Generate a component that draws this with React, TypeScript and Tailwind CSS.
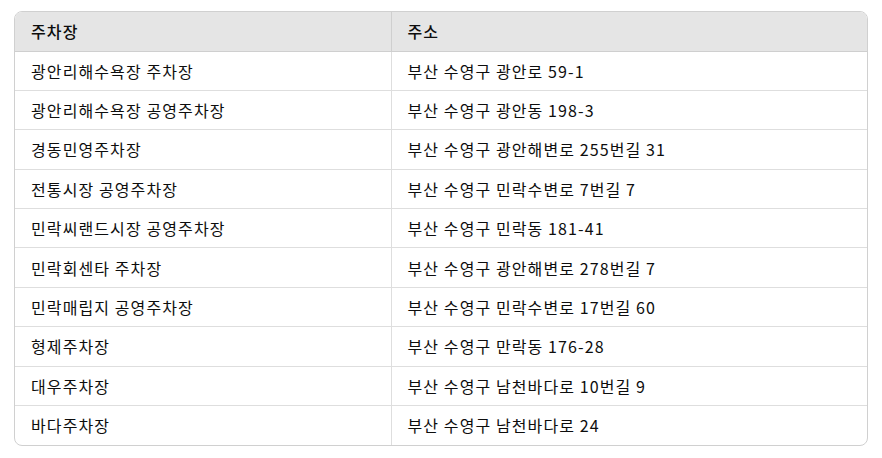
const rows = [
  ["광안리해수욕장 주차장", "부산 수영구 광안로 59-1"],
  ["광안리해수욕장 공영주차장", "부산 수영구 광안동 198-3"],
  ["경동민영주차장", "부산 수영구 광안해변로 255번길 31"],
  ["전통시장 공영주차장", "부산 수영구 민락수변로 7번길 7"],
  ["민락씨랜드시장 공영주차장", "부산 수영구 민락동 181-41"],
  ["민락회센타 주차장", "부산 수영구 광안해변로 278번길 7"],
  ["민락매립지 공영주차장", "부산 수영구 민락수변로 17번길 60"],
  ["형제주차장", "부산 수영구 만락동 176-28"],
  ["대우주차장", "부산 수영구 남천바다로 10번길 9"],
  ["바다주차장", "부산 수영구 남천바다로 24"],
];

export default function App() {
  return (
    <div
      className="min-h-screen bg-white pt-[11px] pl-[14px] pr-[14px] text-[16px] tracking-[1.1px] text-[#0d0d0d]"
      style={{ fontFamily: '"Noto Sans CJK KR", "Noto Sans", sans-serif' }}
    >
      <div className="w-[854px] overflow-hidden rounded-lg border border-[#d0d0d0]">
        <table className="w-full border-collapse">
          <thead>
            <tr className="bg-[#e5e5e5] h-[39px] border-b border-[#cfcfcf]">
              <th className="w-[376px] border-r border-[#cfcfcf] px-4 text-left font-medium">주차장</th>
              <th className="px-4 text-left font-medium">주소</th>
            </tr>
          </thead>
          <tbody>
            {rows.map((r, i) => (
              <tr key={i} className={`h-[39.4px] ${i < rows.length - 1 ? "border-b border-[#dedede]" : ""}`}>
                <td className="border-r border-[#dedede] px-4 leading-none">{r[0]}</td>
                <td className="px-4 leading-none">{r[1]}</td>
              </tr>
            ))}
          </tbody>
        </table>
      </div>
    </div>
  );
}
